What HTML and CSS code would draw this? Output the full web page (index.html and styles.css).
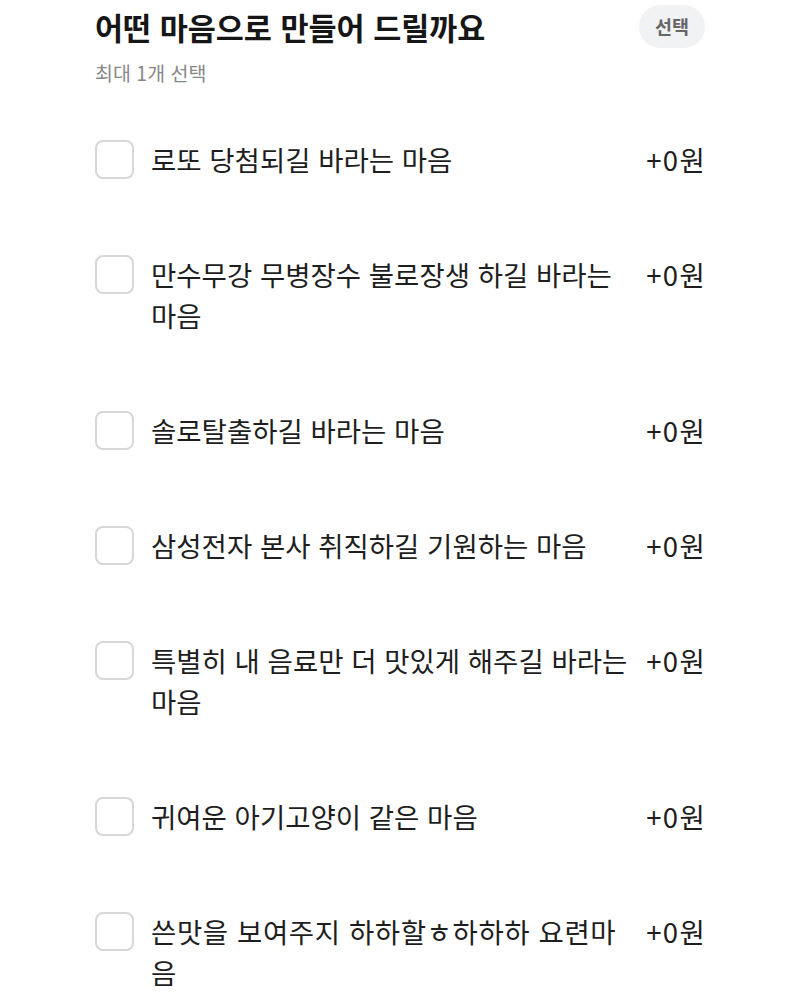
FILE: index.html
```html
<!DOCTYPE html>
<html lang="ko">
<head>
<meta charset="utf-8">
<link rel="stylesheet" href="styles.css">
</head>
<body>
<div class="page">
  <div class="header">
    <div class="head-text">
      <h1 class="title">어떤 마음으로 만들어 드릴까요</h1>
      <p class="sub">최대 1개 선택</p>
    </div>
    <span class="badge">선택</span>
  </div>
  <ul class="options">
    <li class="option"><span class="box"></span><span class="label">로또 당첨되길 바라는 마음</span><span class="price">+0원</span></li>
    <li class="option"><span class="box"></span><span class="label">만수무강 무병장수 불로장생 하길 바라는 마음</span><span class="price">+0원</span></li>
    <li class="option"><span class="box"></span><span class="label">솔로탈출하길 바라는 마음</span><span class="price">+0원</span></li>
    <li class="option"><span class="box"></span><span class="label">삼성전자 본사 취직하길 기원하는 마음</span><span class="price">+0원</span></li>
    <li class="option"><span class="box"></span><span class="label">특별히 내 음료만 더 맛있게 해주길 바라는 마음</span><span class="price">+0원</span></li>
    <li class="option"><span class="box"></span><span class="label">귀여운 아기고양이 같은 마음</span><span class="price">+0원</span></li>
    <li class="option"><span class="box"></span><span class="label label-wide">쓴맛을 보여주지 하하할ㅎ하하하 요련마음</span><span class="price">+0원</span></li>
  </ul>
</div>
</body>
</html>
```
FILE: styles.css
```css
* { box-sizing: border-box; }
html, body { margin: 0; padding: 0; background: #fff; }
body { font-family: "Noto Sans CJK KR", "Noto Sans", sans-serif; color: #1a1a1a; }
.page { padding: 5px 95px 0 95px; }
.header { display: flex; justify-content: space-between; align-items: flex-start; }
.title { margin: 0; font-size: 30.5px; font-weight: 700; line-height: 44px; color: #161616; }
.sub { margin: 10px 0 0 0; font-size: 19.5px; line-height: 28px; color: #888; }
.badge { background: #f1f2f4; color: #666; font-weight: 700; font-size: 18.5px; line-height: 43px; height: 43px; padding: 0 16px; border-radius: 22px; }
.options { list-style: none; margin: 52px 0 0 0; padding: 0; }
.option { display: flex; align-items: flex-start; margin-bottom: 74px; }
.option:last-child { margin-bottom: 0; }
.box { flex: none; width: 39px; height: 39px; border: 2.5px solid #d6d7d9; border-radius: 8px; margin-top: 1px; margin-right: 17px; }
.label { flex: 1; font-size: 27.5px; line-height: 41px; color: #1e1e1e; padding-right: 15px; }
.label-wide { letter-spacing: 0.6px; }
.price { flex: none; font-size: 27.5px; line-height: 41px; letter-spacing: 1.3px; margin-right: -1px; color: #1e1e1e; }
```
